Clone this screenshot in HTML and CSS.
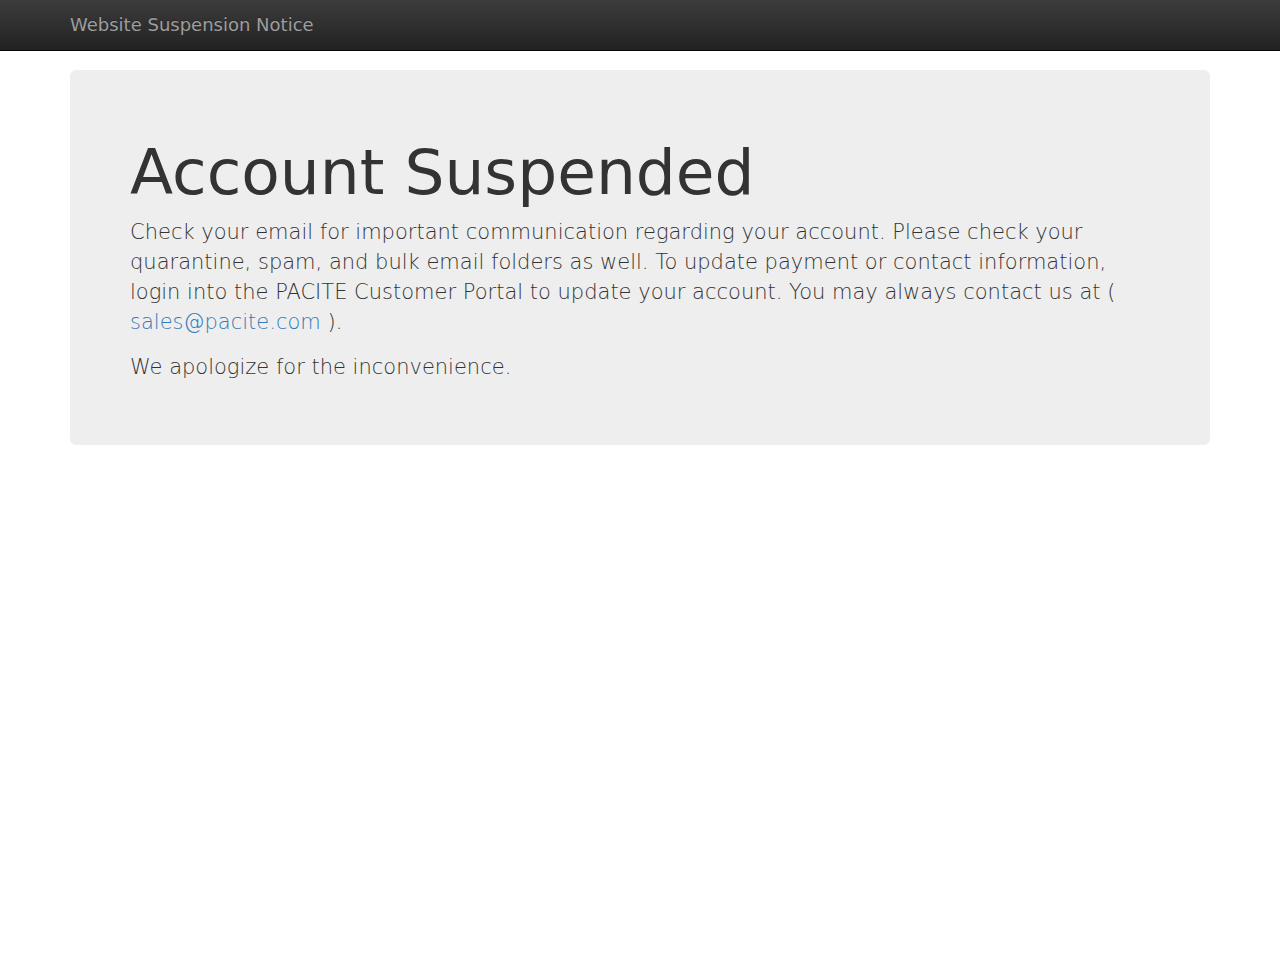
FILE: index.html
```html
<!DOCTYPE html>
<html lang="en">
<head>
<meta charset="utf-8">
<title>Website Suspension Notice</title>
<link rel="stylesheet" href="styles.css">
</head>
<body>
<nav class="navbar">
  <div class="container">
    <a class="navbar-brand" href="#">Website Suspension Notice</a>
  </div>
</nav>
<div class="container">
  <div class="jumbotron">
    <h1>Account Suspended</h1>
    <p>Check your email for important communication regarding your account. Please check your quarantine, spam, and bulk email folders as well. To update payment or contact information, login into the PACITE Customer Portal to update your account. You may always contact us at ( <a href="#">sales@pacite.com</a> ).</p>
    <p>We apologize for the inconvenience.</p>
  </div>
</div>
</body>
</html>
```
FILE: styles.css
```css
html, body {
  margin: 0;
  padding: 0;
}
body {
  font-family: "DejaVu Sans", sans-serif;
  font-size: 14px;
  line-height: 1.42857143;
  color: #333;
  background: #fff;
}
.container {
  width: 1170px;
  margin: 0 auto;
  padding: 0 15px;
  box-sizing: border-box;
}
.navbar {
  height: 51px;
  box-sizing: border-box;
  margin-bottom: 19px;
  background-image: linear-gradient(to bottom, #3c3c3c 0, #222 100%);
  border-bottom: 1px solid #080808;
}
.navbar-brand {
  display: block;
  float: left;
  height: 50px;
  box-sizing: border-box;
  padding: 15px;
  margin-left: -15px;
  font-size: 18px;
  line-height: 20px;
  color: #9d9d9d;
  text-decoration: none;
  text-shadow: 0 -1px 0 rgba(0,0,0,.25);
}
.jumbotron {
  background: #eee;
  border-radius: 6px;
  padding: 48px 60px;
  font-size: 21px;
  font-weight: 200;
}
.jumbotron h1 {
  margin: 20px 0 10px;
  font-size: 63px;
  font-weight: 500;
  line-height: 1.1;
  color: inherit;
}
.jumbotron p {
  margin: 0 0 15px;
  line-height: 1.42857143;
}
.jumbotron a {
  color: #337ab7;
  text-decoration: none;
}
```
